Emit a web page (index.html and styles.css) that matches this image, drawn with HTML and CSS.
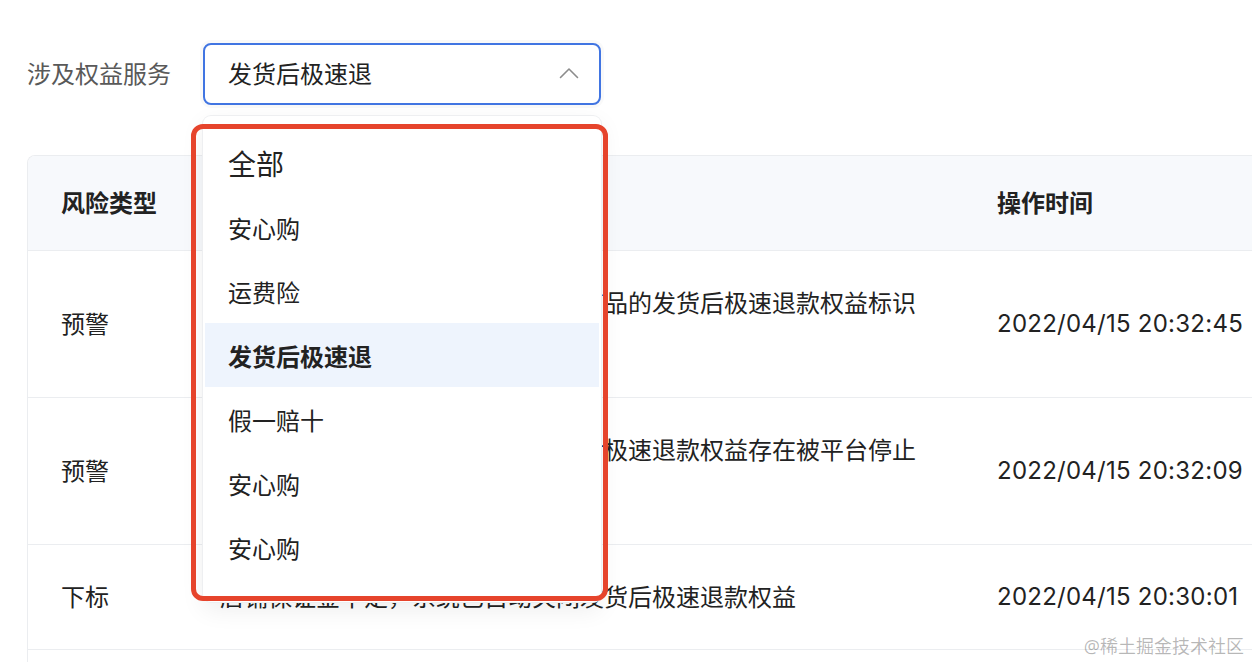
FILE: index.html
```html
<!DOCTYPE html>
<html lang="zh-CN">
<head>
<meta charset="utf-8">
<title>涉及权益服务</title>
<link rel="stylesheet" href="styles.css">
</head>
<body>
<div class="page">
  <div class="filter">
    <span class="filter-label">涉及权益服务</span>
    <div class="select-wrap">
      <div class="select">
        <span class="select-value">发货后极速退</span>
        <svg class="chevron" width="20" height="12" viewBox="0 0 20 12"><polyline points="1.5,10.5 10,2 18.5,10.5" fill="none" stroke="#8c8c8c" stroke-width="1.6" stroke-linecap="round" stroke-linejoin="round"/></svg>
      </div>
      <ul class="dropdown">
        <li class="option option-all">全部</li>
        <li class="option">安心购</li>
        <li class="option">运费险</li>
        <li class="option option-selected">发货后极速退</li>
        <li class="option">假一赔十</li>
        <li class="option">安心购</li>
        <li class="option">安心购</li>
      </ul>
      <div class="highlight"></div>
    </div>
  </div>

  <div class="table-card">
    <table class="table">
      <colgroup>
        <col class="col-type">
        <col class="col-desc">
        <col class="col-time">
      </colgroup>
      <thead>
        <tr>
          <th>风险类型</th>
          <th>风险描述</th>
          <th>操作时间</th>
        </tr>
      </thead>
      <tbody>
        <tr>
          <td>预警</td>
          <td>店铺已手动关闭了店铺内所有在售商品的发货后极速退款权益标识展示</td>
          <td class="time">2022/04/15 20:32:45</td>
        </tr>
        <tr>
          <td>预警</td>
          <td>因店铺存在违规操作，商品的发货后极速退款权益存在被平台停止的风险</td>
          <td class="time">2022/04/15 20:32:09</td>
        </tr>
        <tr>
          <td>下标</td>
          <td>店铺保证金不足，系统已自动关闭发货后极速退款权益</td>
          <td class="time">2022/04/15 20:30:01</td>
        </tr>
      </tbody>
    </table>
  </div>

  <div class="watermark">@稀土掘金技术社区</div>
</div>
</body>
</html>
```

FILE: styles.css
```css
* {
  box-sizing: border-box;
}

html, body {
  margin: 0;
  padding: 0;
  background: #ffffff;
  overflow: hidden;
}

body {
  width: 1252px;
  height: 662px;
  font-family: "Noto Sans", "Noto Sans CJK SC", sans-serif;
  color: #222222;
  font-size: 24px;
}

.page {
  position: relative;
  height: 662px;
  overflow: hidden;
  padding: 43px 0 0 27px;
}

.filter {
  display: flex;
  align-items: center;
  gap: 32px;
  height: 62px;
}

.filter-label {
  color: #595959;
  font-size: 24px;
  line-height: 32px;
  white-space: nowrap;
}

.select-wrap {
  position: relative;
  width: 398px;
  height: 62px;
  z-index: 5;
}

.select {
  display: flex;
  align-items: center;
  justify-content: space-between;
  height: 62px;
  padding: 0 20px 0 23px;
  border: 2px solid #4175e2;
  border-radius: 8px;
  background: #fff;
  box-shadow: 0 0 0 3px rgba(0, 0, 0, 0.025);
}

.select-value {
  font-size: 24px;
  line-height: 32px;
  color: #222;
}

.chevron {
  display: block;
  margin-top: -2px;
}

.dropdown {
  position: absolute;
  top: 73px;
  left: 0;
  width: 398px;
  height: 486px;
  margin: 0;
  padding: 15px 2px 12px;
  list-style: none;
  background: #fff;
  border-radius: 8px;
  box-shadow: 0 0 0 1px #eeeff1, 0 8px 24px rgba(0, 0, 0, 0.07);
}

.option {
  display: flex;
  align-items: center;
  height: 64px;
  padding-left: 23px;
  font-size: 24px;
  color: #222;
}

.option-all {
  font-size: 28px;
}

.option-selected {
  background: #eef4fd;
  font-weight: 600;
}

.highlight {
  position: absolute;
  left: -12px;
  top: 81px;
  width: 417px;
  height: 477px;
  border: 5px solid #e6442c;
  border-radius: 12px;
  pointer-events: none;
}

.table-card {
  margin-top: 50px;
  width: 1260px;
  height: 560px;
  border-left: 1px solid #ebedf0;
  border-top: 1px solid #ebedf0;
  border-top-left-radius: 8px;
  overflow: hidden;
}

.table {
  width: 100%;
  border-collapse: separate;
  border-spacing: 0;
  table-layout: fixed;
}

.col-type {
  width: 158px;
}

.col-desc {
  width: 777px;
}

.table th,
.table td {
  text-align: left;
  vertical-align: middle;
  font-size: 24px;
  line-height: 42px;
  border-bottom: 1px solid #ebedf0;
  white-space: normal;
}

.table th {
  padding: 26px 34px 26px 34px;
  background: #f7f9fc;
  font-weight: 600;
  color: #222;
}

.table td {
  padding: 31px 43px 31px 34px;
  color: #222;
}

.table th:first-child,
.table td:first-child {
  padding-left: 33px;
  padding-right: 0;
  white-space: nowrap;
}

.time {
  font-family: "Inter", "Noto Sans", sans-serif;
  letter-spacing: 0.25px;
}

.table td.time {
  white-space: nowrap;
}

.watermark {
  position: absolute;
  right: 8px;
  bottom: 4px;
  font-size: 18px;
  line-height: 24px;
  color: rgba(0, 0, 0, 0.28);
  z-index: 6;
}
```
